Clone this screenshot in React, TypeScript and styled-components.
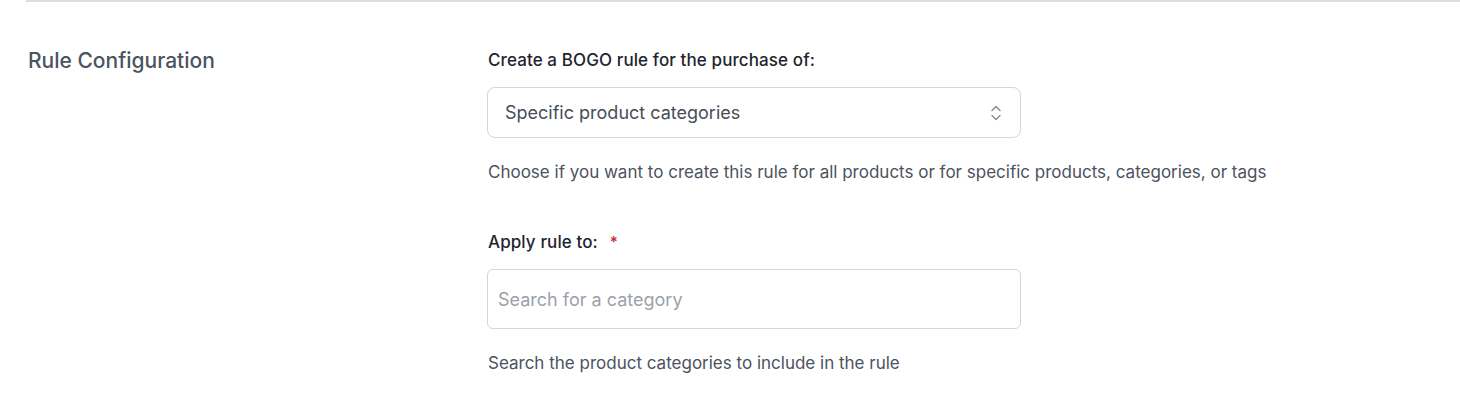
import React from "react";
import styled, { createGlobalStyle } from "styled-components";

const Global = createGlobalStyle`
  html, body { margin: 0; padding: 0; background: #ffffff; }
  body { font-family: Inter, "Noto Sans", sans-serif; -webkit-font-smoothing: antialiased; }
  * { box-sizing: border-box; }
`;

const Section = styled.section`
  margin-left: 26px;
  border-top: 2px solid #dedede;
  padding: 47px 0 0 2px;
  display: grid;
  grid-template-columns: 459px 534px;
`;

const Title = styled.h2`
  margin: 0;
  font-size: 21px;
  line-height: 24px;
  font-weight: 500;
  color: #4a5462;
`;

const Fields = styled.div`
  display: flex;
  flex-direction: column;
`;

const Field = styled.div<{ $gap?: number }>`
  display: flex;
  flex-direction: column;
  margin-bottom: ${(p) => p.$gap ?? 0}px;
`;

const Label = styled.label`
  display: flex;
  align-items: center;
  gap: 12px;
  font-size: 17px;
  line-height: 22px;
  font-weight: 500;
  letter-spacing: 0.1px;
  color: #1f2430;
  margin: 0 0 16px 1px;
`;

const Required = styled.span`
  color: #c8283a;
  font-size: 15px;
  font-weight: 600;
`;

const SelectBox = styled.div`
  height: 51px;
  border: 1px solid #d3d6db;
  border-radius: 8px;
  display: flex;
  align-items: center;
  justify-content: space-between;
  padding: 0 17px 0 17px;
  font-size: 18px;
  color: #464d58;
  background: #fff;
`;

const InputBox = styled.input`
  height: 60px;
  width: 100%;
  border: 1px solid #d3d6db;
  border-radius: 6px;
  padding: 0 10px;
  font-family: inherit;
  font-size: 18px;
  color: #374151;
  background: #fff;
  outline: none;
  &::placeholder { color: #9ba1aa; }
`;

const Help = styled.p`
  margin: 22px 0 0 1px;
  font-size: 17px;
  line-height: 24px;
  color: #4b5360;
  white-space: nowrap;
`;

const Chevrons = () => (
  <svg width="14" height="20" viewBox="0 0 14 20" fill="none" stroke="#8a9099" strokeWidth="1.5" strokeLinecap="round" strokeLinejoin="round">
    <path d="M3 7.5 L7 3.5 L11 7.5" />
    <path d="M3 12.5 L7 16.5 L11 12.5" />
  </svg>
);

export default function App() {
  return (
    <>
      <Global />
      <Section>
        <Title>Rule Configuration</Title>
        <Fields>
          <Field $gap={47}>
            <Label>Create a BOGO rule for the purchase of:</Label>
            <SelectBox>
              <span>Specific product categories</span>
              <Chevrons />
            </SelectBox>
            <Help>Choose if you want to create this rule for all products or for specific products, categories, or tags</Help>
          </Field>
          <Field>
            <Label>
              Apply rule to: <Required>*</Required>
            </Label>
            <InputBox placeholder="Search for a category" />
            <Help>Search the product categories to include in the rule</Help>
          </Field>
        </Fields>
      </Section>
    </>
  );
}
